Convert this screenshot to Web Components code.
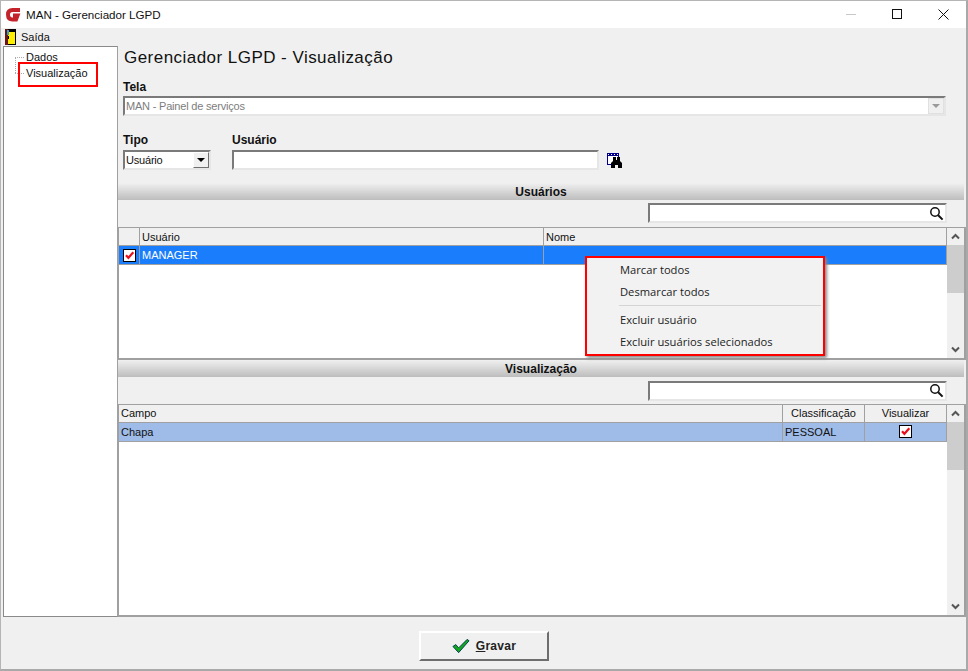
<!DOCTYPE html>
<html lang="pt">
<head>
<meta charset="utf-8">
<title>MAN - Gerenciador LGPD</title>
<style>
  html, body { margin: 0; padding: 0; background: #f0f0f0; }
  body { font: 11px "Liberation Sans", Arial, sans-serif; color: #000; }
</style>
</head>
<body>
<man-window>
  <win-titlebar slot="title" caption="MAN - Gerenciador LGPD"></win-titlebar>
  <win-menubar slot="menu"></win-menubar>
  <tree-panel slot="tree"></tree-panel>
  <lgpd-form slot="content"></lgpd-form>
  <save-footer slot="footer"></save-footer>
</man-window>

<script>
const el = (html) => {
  const template = document.createElement("template");
  template.innerHTML = html;
  return template;
};

const checkSvg = `<svg width="13" height="13" viewBox="0 0 13 13" style="display:block">
  <rect x=".5" y=".5" width="12" height="12" fill="#fff" stroke="#000"/>
  <path d="M3 6.2 5.4 8.8 10.3 3.2" fill="none" stroke="#e8101c" stroke-width="2.2"/>
</svg>`;

class Base extends HTMLElement {
  constructor() {
    super();
    this.attachShadow({ mode: "open" });
    this.shadowRoot.appendChild(this.constructor.template.content.cloneNode(true));
  }
}

class ManWindow extends Base {
  static template = el(`<style>
    :host {
      display: flex;
      flex-direction: column;
      box-sizing: border-box;
      width: 968px;
      height: 671px;
      background: #f0f0f0;
      border-right: 2px solid #a9a9a9;
      border-left: 1px solid #b5b5b5;
      border-top: 1px solid #b5b5b5;
      border-bottom: 2px solid #a9a9a9;
    }
    #main { display: flex; height: 571px; padding-left: 2px; }
  </style>
  <slot name="title"></slot>
  <slot name="menu"></slot>
  <div id="main">
    <slot name="tree"></slot>
    <slot name="content"></slot>
  </div>
  <slot name="footer"></slot>`);
}

class WinTitlebar extends Base {
  static template = el(`<style>
    :host {
      display: flex;
      align-items: center;
      height: 27px;
      background: #fff;
      color: #111;
    }
    svg { display: block; }
    #logo { margin: 0 4px 0 4px; }
    #caption { flex: 1; font-size: 11.6px; }
    .btn { width: 46px; height: 27px; display: flex; align-items: center; justify-content: center; }
  </style>
  <svg id="logo" width="17" height="17" viewBox="0 0 17 17">
    <path d="M15 4H7.500Q3 4 3 8.500 3 13.500 7.500 13.500H11L12.500 9.500H8" fill="none" stroke="#c4232b" stroke-width="4"/>
  </svg>
  <span id="caption"></span>
  <span class="btn"><svg width="11" height="11"><path d="M0 5.500H10" stroke="#c8c8c8"/></svg></span>
  <span class="btn"><svg width="11" height="11"><rect x=".5" y=".5" width="9" height="9" fill="none" stroke="#111"/></svg></span>
  <span class="btn"><svg width="11" height="11"><path d="M.5 .5 10.500 10.500M10.500 .5 .5 10.500" stroke="#111"/></svg></span>`);

  connectedCallback() {
    this.shadowRoot.getElementById("caption").textContent = this.getAttribute("caption");
  }
}

class WinMenubar extends Base {
  static template = el(`<style>
    :host {
      display: flex;
      align-items: center;
      height: 18px;
      padding-left: 4px;
      font-size: 11px;
      color: #111;
      gap: 5px;
    }
    svg { display: block; }
  </style>
  <svg width="11" height="16" viewBox="0 0 11 16">
    <rect x="0" y="0" width="11" height="16" fill="#000"/>
    <rect x="0" y="0" width="3" height="16" fill="#6b1414"/>
    <rect x="3" y="3" width="7" height="12" fill="#ffee00"/>
    <rect x="2" y="1" width="2" height="5" fill="#2f9fd0"/>
    <rect x="3" y="7" width="1" height="3" fill="#000"/>
  </svg>
  <span>Saída</span>`);
}

class TreePanel extends Base {
  static template = el(`<style>
    :host {
      display: block;
      box-sizing: border-box;
      width: 115px;
      height: 571px;
      background: #fff;
      border: 1px solid #8a8a8a;
      border-right-color: #a0a0a0;
      position: relative;
      font-size: 11px;
    }
    ul { list-style: none; margin: 0; padding: 2px 0 0 22px; }
    li { height: 16px; line-height: 16px; position: relative; color: #111; }
    li::before {
      content: "";
      position: absolute;
      left: -11px;
      width: 9px;
      top: 8px;
      border-top: 1px dotted #aaa;
    }
    #stem { position: absolute; left: 11px; top: 10px; height: 16px; border-left: 1px dotted #aaa; }
    /* red annotation drawn over the tree */
    #mark {
      position: absolute;
      left: 14px;
      top: 15px;
      width: 80px;
      height: 25px;
      box-sizing: border-box;
      border: 2px solid #f00;
    }
  </style>
  <span id="stem"></span>
  <ul><li>Dados</li><li>Visualização</li></ul>
  <span id="mark"></span>`);
}

class FormLabel extends Base {
  static template = el(`<style>
    :host { display: block; font-weight: bold; font-size: 12px; line-height: 14px; color: #111; }
  </style><slot></slot>`);
}

class SunkenBox extends Base {
  static template = el(`<style>
    :host {
      display: flex;
      align-items: center;
      box-sizing: border-box;
      height: 20px;
      background: #fff;
      border-style: solid;
      border-width: 2px;
      border-color: #7a7a7a #e6e6e6 #e6e6e6 #7a7a7a;
      font-size: 11px;
      letter-spacing: -.2px;
      color: #111;
      padding-left: 1px;
      overflow: hidden;
    }
    :host([disabled]) { color: #7d7d7d; }
    #text { flex: 1; white-space: nowrap; }
    #arrow {
      display: none;
      width: 16px;
      height: 16px;
      box-sizing: border-box;
      background: #f0f0f0;
      border: 1px solid;
      border-color: #fff #707070 #707070 #fff;
      align-items: center;
      justify-content: center;
    }
    :host([combo]) #arrow { display: flex; }
    :host([disabled]) #arrow { border-color: #e0e0e0; }
    #arrow i { border: 4px solid transparent; border-top: 4px solid #000; border-bottom: 0; }
    :host([disabled]) #arrow i { border-top-color: #9a9a9a; }
    #lens { display: none; margin-right: 1px; }
    :host([search]) #lens { display: block; }
  </style>
  <span id="text"><slot></slot></span>
  <span id="arrow"><i></i></span>
  <svg id="lens" width="15" height="15" viewBox="0 0 15 15">
    <circle cx="6" cy="6" r="4.200" fill="none" stroke="#111" stroke-width="1.500"/>
    <path d="M9.200 9.200 13.600 13.600" stroke="#111" stroke-width="2"/>
  </svg>`);
}

class SectionBar extends Base {
  static template = el(`<style>
    :host {
      display: block;
      width: 846px;
      height: 17px;
      line-height: 19px;
      text-align: center;
      font-weight: bold;
      font-size: 12px;
      color: #111;
      background: linear-gradient(#f0f0f0, #bdbdbd);
    }
  </style><slot></slot>`);
}

class DataGrid extends Base {
  static template = el(`<style>
    :host {
      display: flex;
      box-sizing: border-box;
      background: #fff;
      border: 1px solid #a0a0a0;
      border-right-width: 2px;
      border-bottom-width: 2px;
      font-size: 11px;
      color: #111;
      position: relative;
    }
    #table { flex: 1; min-width: 0; }
    .row { display: grid; height: 19px; box-sizing: border-box; border-bottom: 1px solid #a0a0a0; }
    .row.head { height: 18px; background: #f0f0f0; }
    .cell {
      display: flex;
      align-items: center;
      box-sizing: border-box;
      padding-left: 2px;
      border-right: 1px solid #a0a0a0;
      white-space: nowrap;
      overflow: hidden;
    }
    .cell.center { justify-content: center; padding-left: 0; }
    .row.on { background: var(--selected, #1a7dfb); color: var(--selected-text, #fff); }
    #scroll { width: 17px; display: flex; flex-direction: column; background: #f0f0f0; }
    #scroll svg { display: block; margin: 5px auto; }
    #thumb { height: 48px; background: #cdcdcd; }
    #gap { flex: 1; }
  </style>
  <div id="table"></div>
  <div id="scroll">
    <svg width="9" height="7" viewBox="0 0 9 7"><path d="M1 5.500 4.500 2 8 5.500" fill="none" stroke="#555" stroke-width="2"/></svg>
    <div id="thumb"></div>
    <div id="gap"></div>
    <svg width="9" height="7" viewBox="0 0 9 7"><path d="M1 1.500 4.500 5 8 1.500" fill="none" stroke="#555" stroke-width="2"/></svg>
  </div>
  <slot></slot>`);

  // columns: "w1 w2 w3"; heads and cells separated by |; "[x]" paints a checkbox
  connectedCallback() {
    const cols = this.getAttribute("cols");
    const table = this.shadowRoot.getElementById("table");
    const addRow = (text, cls, centered) => {
      const row = document.createElement("div");
      row.className = "row " + cls;
      row.style.gridTemplateColumns = cols;
      text.split("|").forEach((value, i) => {
        const cell = document.createElement("div");
        cell.className = "cell";
        if (centered.includes(String(i))) cell.classList.add("center");
        if (value === "[x]") cell.innerHTML = checkSvg;
        else cell.textContent = value;
        row.appendChild(cell);
      });
      table.appendChild(row);
    };
    addRow(this.getAttribute("head"), "head", (this.getAttribute("head-center") || "").split(","));
    addRow(this.getAttribute("row"), "on", (this.getAttribute("center") || "").split(","));
  }
}

class ContextMenu extends Base {
  static template = el(`<style>
    :host {
      display: block;
      position: absolute;
      left: 466px;
      top: 28px;
      width: 240px;
      height: 100px;
      box-sizing: border-box;
      background: #f2f2f2;
      border: 2px solid #f00;
      box-shadow: 2px 2px 3px #888;
      padding: 1px 0 0 33px;
      font: 11.2px "Open Sans", "Liberation Sans", sans-serif;
      color: #222;
    }
    div { height: 22px; line-height: 22px; white-space: nowrap; }
    hr { margin: 2px 2px 3px -1px; border: 0; border-top: 1px solid #d4d4d4; height: 0; }
  </style>
  <div>Marcar todos</div>
  <div>Desmarcar todos</div>
  <hr>
  <div>Excluir usuário</div>
  <div>Excluir usuários selecionados</div>`);
}

class LgpdForm extends Base {
  static template = el(`<style>
    :host { display: flex; flex-direction: column; width: 848px; height: 571px; }
    h1 {
      margin: 2px 0 0 6px;
      height: 20px;
      font: normal 17px/20px "Liberation Sans", Arial, sans-serif;
      letter-spacing: .46px;
      color: #111;
    }
    #top { padding: 0 20px 0 5px; }
    #tela { margin-top: 12px; }
    #tela sunken-box { margin-top: 2px; }
    #filters { display: flex; gap: 21px; margin-top: 17px; align-items: flex-start; height: 38px; }
    #filters sunken-box { margin-top: 3px; }
    #tipo { width: 88px; }
    #user { width: 367px; }
    #find { margin: 20px 0 0 -13px; display: block; }
    .search { display: flex; justify-content: flex-end; width: 829px; height: 20px; padding: 3px 0 4px; }
    #s2 { padding: 4px 0 3px; }
    .search sunken-box { width: 299px; }
    #g1 { height: 133px; }
    #g2 { height: 214px; --selected: #9fbce9; --selected-text: #111; }
    #bar1 { margin-top: 12px; }
  </style>
  <h1>Gerenciador LGPD - Visualização</h1>
  <div id="top">
    <div id="tela">
      <form-label>Tela</form-label>
      <sunken-box disabled combo>MAN - Painel de serviços</sunken-box>
    </div>
    <div id="filters">
      <div id="tipo">
        <form-label>Tipo</form-label>
        <sunken-box combo>Usuário</sunken-box>
      </div>
      <div id="user">
        <form-label>Usuário</form-label>
        <sunken-box></sunken-box>
      </div>
      <svg id="find" width="16" height="15" viewBox="0 0 16 15">
        <rect x="0.500" y="0.500" width="11" height="11" fill="#fff" stroke="#00008b"/>
        <rect x="0" y="0" width="12" height="3" fill="#00008b"/>
        <path d="M1 1.500h1M4 1.500h1M7 1.500h1M10 1.500h1" stroke="#fff"/>
        <path d="M6 4h3v3h1V4h3v4l2 2v5h-4v-3h-3v3H4v-5l2-2z" fill="#000"/>
      </svg>
    </div>
  </div>
  <section-bar id="bar1">Usuários</section-bar>
  <div class="search"><sunken-box search></sunken-box></div>
  <data-grid id="g1" cols="21px 404px 1fr" center="0" head-center="" head="|Usuário|Nome" row="[x]|MANAGER|">
    <context-menu></context-menu>
  </data-grid>
  <section-bar>Visualização</section-bar>
  <div class="search" id="s2"><sunken-box search></sunken-box></div>
  <data-grid id="g2" cols="664px 82px 1fr" center="2" head-center="1,2" head="Campo|Classificação|Visualizar" row="Chapa|PESSOAL|[x]"></data-grid>`);
}

class SaveFooter extends Base {
  static template = el(`<style>
    :host {
      display: flex;
      justify-content: center;
      align-items: center;
      flex: 1;
      padding: 5px 0 0 1px;
    }
    button {
      display: flex;
      align-items: center;
      justify-content: center;
      gap: 6px;
      width: 130px;
      height: 30px;
      padding: 0;
      background: #f0f0f0;
      border: 2px solid;
      border-color: #fff #6e6e6e #6e6e6e #fff;
      font: bold 12px "Liberation Sans", Arial, sans-serif;
      letter-spacing: .3px;
      color: #222;
    }
    u { text-decoration: underline; }
  </style>
  <button>
    <svg width="18" height="16" viewBox="0 0 19 16">
      <path d="M1 8.500 4 6.500 7 10 16 1 18 2.500 7 15Z" fill="#0fa81f" stroke="#063a50" stroke-width="1"/>
    </svg>
    <span><u>G</u>ravar</span>
  </button>`);
}

customElements.define("man-window", ManWindow);
customElements.define("win-titlebar", WinTitlebar);
customElements.define("win-menubar", WinMenubar);
customElements.define("tree-panel", TreePanel);
customElements.define("form-label", FormLabel);
customElements.define("sunken-box", SunkenBox);
customElements.define("section-bar", SectionBar);
customElements.define("data-grid", DataGrid);
customElements.define("context-menu", ContextMenu);
customElements.define("lgpd-form", LgpdForm);
customElements.define("save-footer", SaveFooter);
</script>
</body>
</html>
